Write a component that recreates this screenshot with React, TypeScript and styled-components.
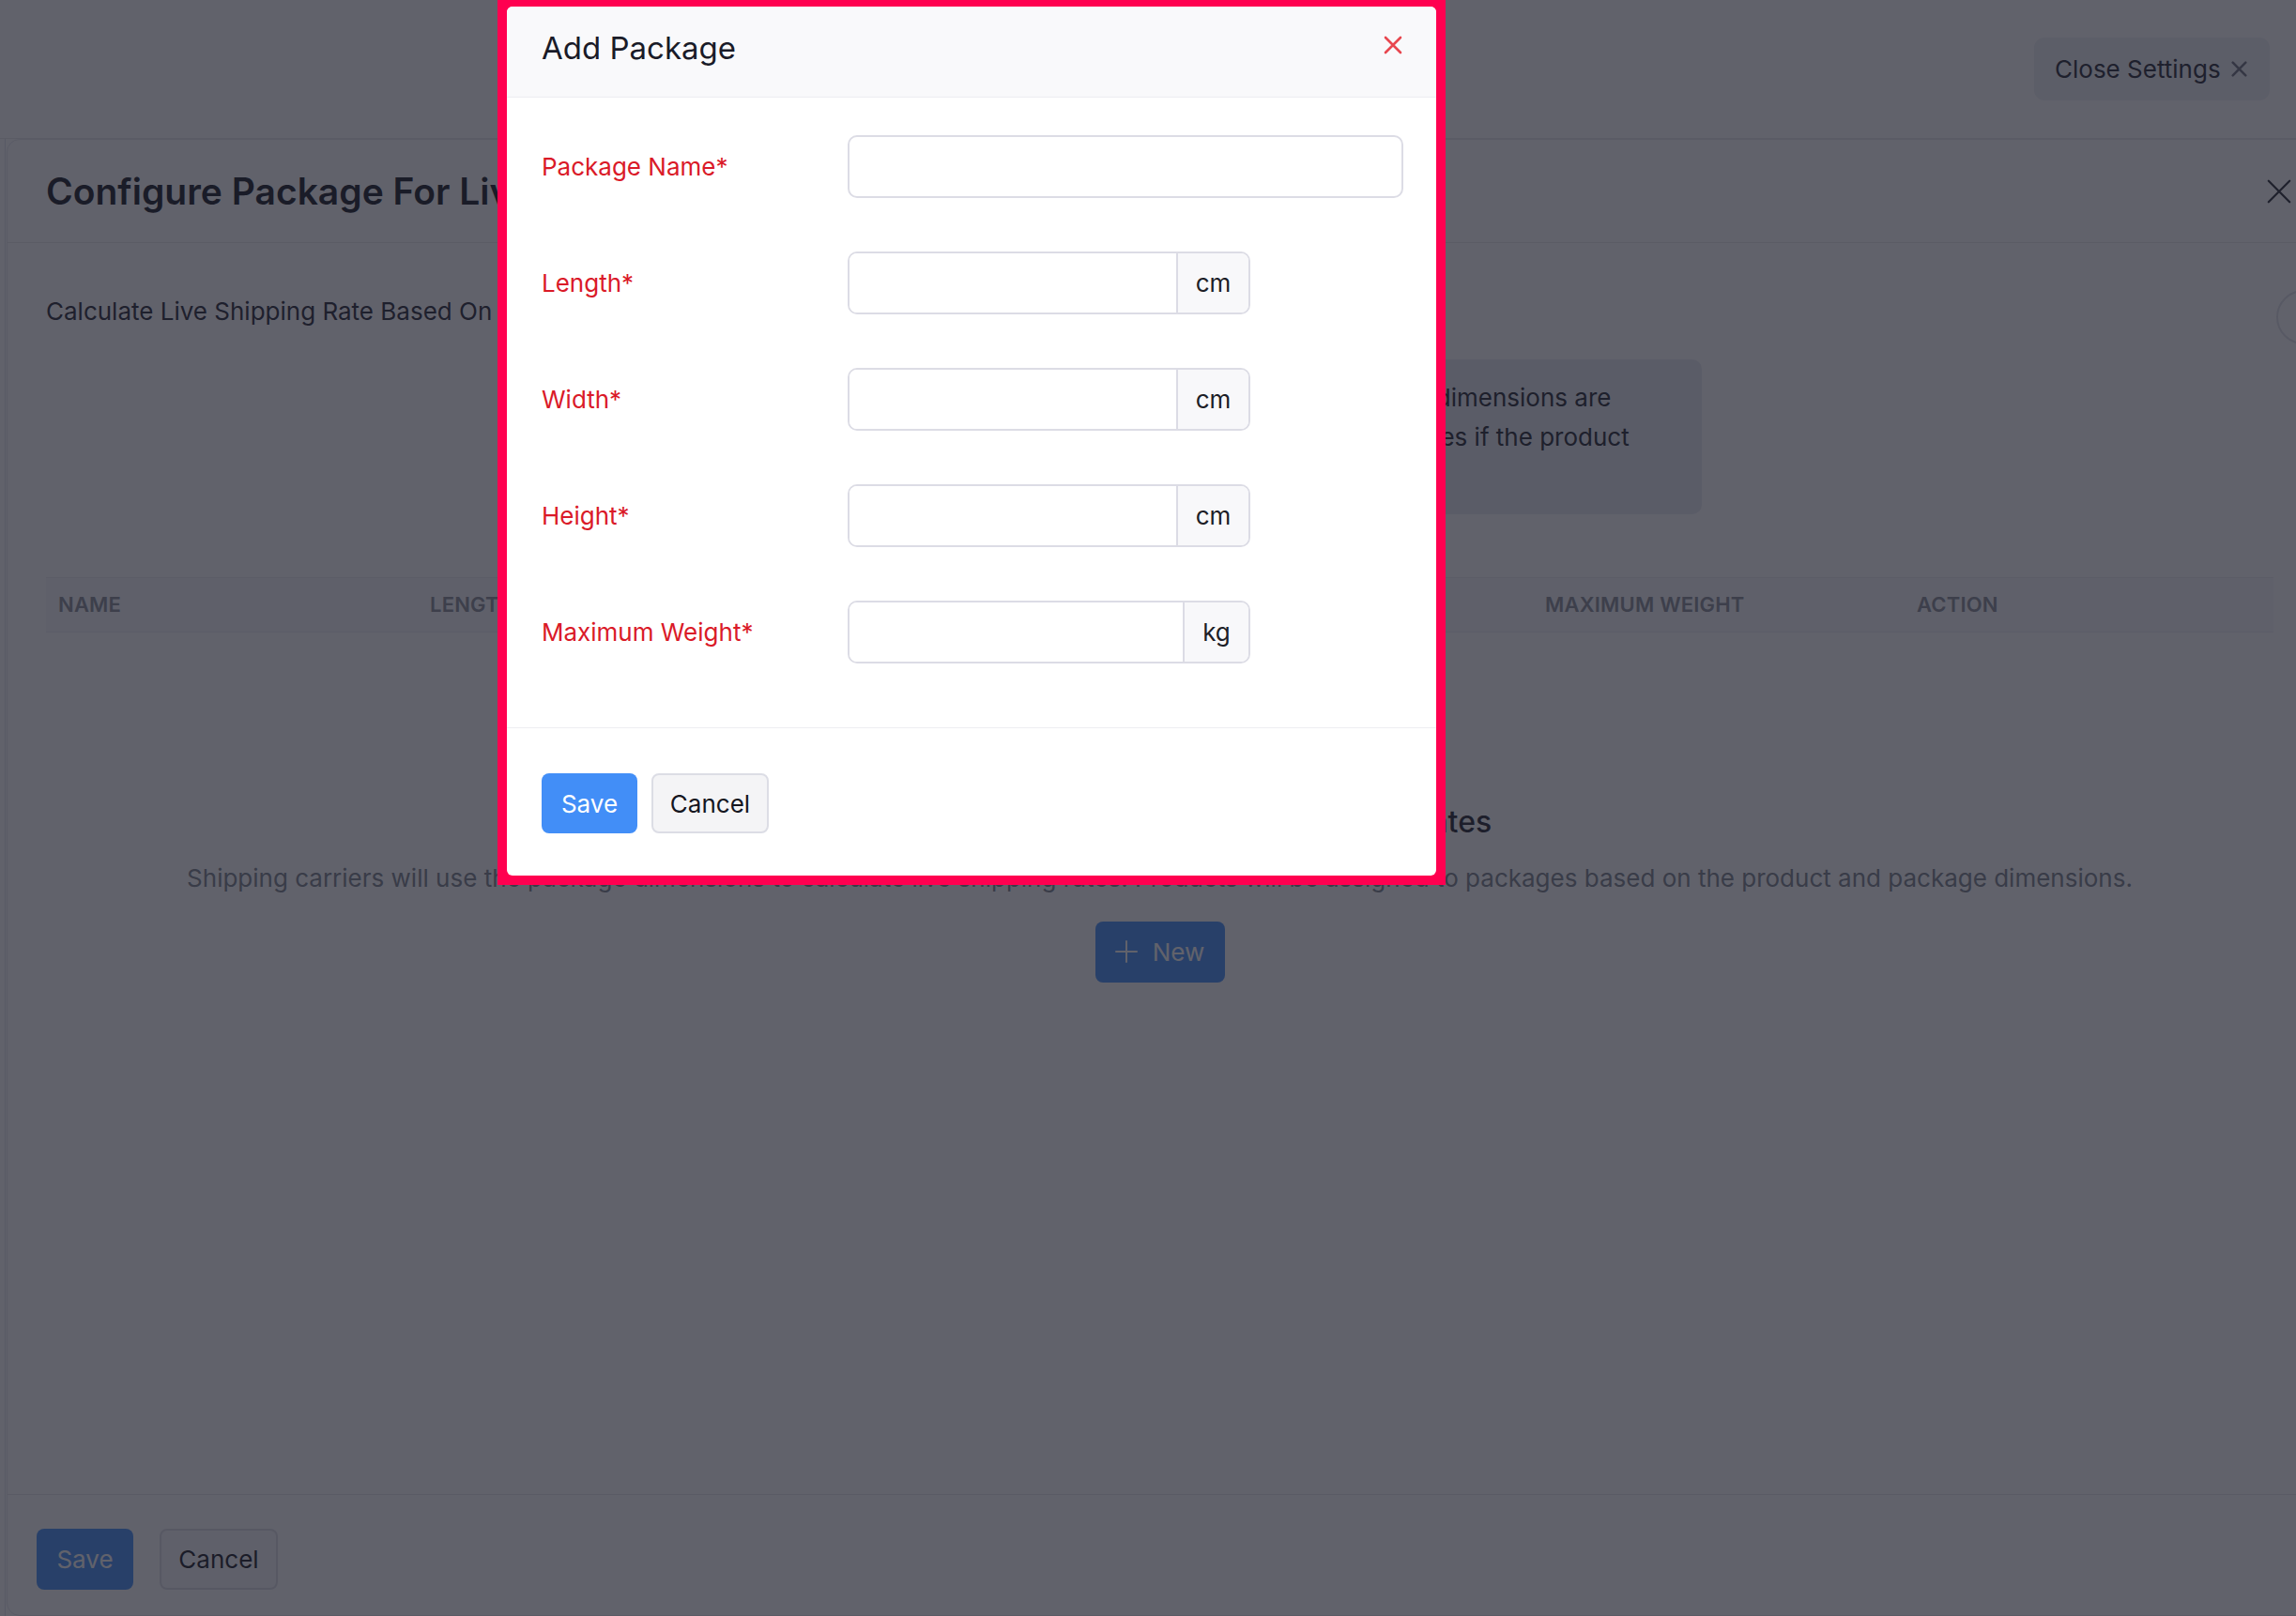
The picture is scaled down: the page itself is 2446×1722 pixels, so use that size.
import React from 'react';
import styled, { createGlobalStyle } from 'styled-components';

const GlobalStyle = createGlobalStyle`
  html, body {
    margin: 0;
    padding: 0;
    background: #ffffff;
  }

  body {
    font-family: Inter, 'Noto Sans', 'Liberation Sans', sans-serif;
    color: #1f2230;
  }

  * {
    box-sizing: border-box;
  }
`;

const Page = styled.div`
  position: relative;
  width: 100vw;
  height: 100vh;
  overflow: hidden;
  background: #ffffff;
`;

const TopBar = styled.header`
  height: 148px;
  display: flex;
  align-items: center;
  justify-content: flex-end;
  padding: 0 28px 0 0;
  border-bottom: 1px solid #e6e7ec;
`;

const CloseSettingsButton = styled.button`
  display: flex;
  align-items: center;
  gap: 11px;
  height: 67px;
  width: 251px;
  padding: 0 22px;
  border: none;
  border-radius: 11px;
  background: #eef0f4;
  font-family: inherit;
  font-size: 26px;
  color: #1f2330;
  cursor: pointer;
`;

const SettingsArea = styled.div`
  height: calc(100vh - 148px);
  margin-left: 5px;
  border-left: 1px solid #e2e4ea;
  padding-left: 1px;
`;

const Panel = styled.section`
  width: 2456px;
  height: 100%;
  display: flex;
  flex-direction: column;
  border: 1px solid #e6e7ec;
  border-radius: 14px;
  background: #ffffff;
`;

const PanelHeader = styled.div`
  height: 110px;
  flex-shrink: 0;
  display: flex;
  align-items: center;
  justify-content: space-between;
  padding: 0 20px 0 41px;
  border-bottom: 1px solid #e6e7ec;
`;

const PanelTitle = styled.h1`
  margin: 0;
  font-size: 39px;
  font-weight: 600;
  color: #121420;
`;

const IconButton = styled.button<{ lift?: number }>`
  display: flex;
  align-items: center;
  justify-content: center;
  padding: 0;
  margin-top: ${({ lift }) => (lift ? -lift : 0)}px;
  border: none;
  background: transparent;
  cursor: pointer;
`;

const PanelBody = styled.div`
  flex: 1;
  padding: 50px 0 0 41px;
  width: 2414px;
`;

const RateRow = styled.div`
  display: grid;
  grid-template-columns: 820px 1fr;
`;

const RowLabel = styled.div`
  font-size: 26px;
  line-height: 46px;
  color: #1f2230;
`;

const RadioGroup = styled.div`
  display: flex;
  gap: 48px;
  height: 46px;
  align-items: center;
`;

const RadioOption = styled.label`
  display: flex;
  align-items: center;
  gap: 14px;
  font-size: 26px;
  color: #1f2230;
`;

const RadioDot = styled.span<{ checked?: boolean }>`
  width: 24px;
  height: 24px;
  border-radius: 50%;
  border: ${({ checked }) => (checked ? '7px solid #428ef7' : '2px solid #c9ccd6')};
`;

const InfoBox = styled.div`
  margin-top: 28px;
  width: 944px;
  padding: 20px 24px;
  border-radius: 10px;
  background: #e8ebf2;
  font-size: 26px;
  line-height: 41.5px;
  color: #20222c;
  white-space: nowrap;
`;

const TableHead = styled.div`
  margin-top: 67px;
  width: 2373px;
  height: 59px;
  display: grid;
  grid-template-columns: repeat(6, 396px);
  align-items: center;
  padding-left: 13px;
  overflow: hidden;
  background: #f7f8fa;
  border-top: 1px solid #eceef2;
  border-bottom: 1px solid #eceef2;
`;

const HeadCell = styled.div`
  font-size: 22px;
  font-weight: 600;
  letter-spacing: 0.2px;
  text-transform: uppercase;
  color: #858a95;
`;

const EmptyState = styled.div`
  width: 2373px;
  padding-top: 180px;
  display: flex;
  flex-direction: column;
  align-items: center;
`;

const EmptyTitle = styled.h2`
  margin: 0;
  font-size: 32px;
  line-height: 44px;
  font-weight: 500;
  color: #1b1d29;
`;

const EmptyText = styled.p`
  margin: 18px 0 0;
  font-size: 26px;
  line-height: 40px;
  color: #7a7f8b;
`;

const PrimaryButton = styled.button<{ width: number; height: number }>`
  display: flex;
  align-items: center;
  justify-content: center;
  gap: 16px;
  width: ${({ width }) => width}px;
  height: ${({ height }) => height}px;
  border: none;
  border-radius: 8px;
  background: #428ef7;
  color: #ffffff;
  font-family: inherit;
  font-size: 26px;
  cursor: pointer;
`;

const NewButton = styled(PrimaryButton)`
  margin-top: 26px;
`;

const SecondaryButton = styled.button<{ width: number; height: number; ghost?: boolean }>`
  width: ${({ width }) => width}px;
  height: ${({ height }) => height}px;
  border: 2px solid #dcdde5;
  border-radius: 8px;
  background: ${({ ghost }) => (ghost ? '#f7f8fa' : '#f4f4f6')};
  color: #15161f;
  font-family: inherit;
  font-size: 26px;
  cursor: pointer;
`;

const PanelFooter = styled.div<{ gap: number }>`
  flex-shrink: 0;
  display: flex;
  gap: ${({ gap }) => gap}px;
  padding: 36px 0 27px 31px;
  border-top: 1px solid #e6e7ec;
`;

const HelpBubble = styled.div`
  position: absolute;
  left: 2425px;
  top: 309px;
  width: 58px;
  height: 58px;
  border-radius: 50%;
  border: 2px solid #dfe2e8;
  background: #ffffff;
`;

const Backdrop = styled.div`
  position: fixed;
  inset: 0;
  background: rgba(30, 32, 44, 0.7);
`;

const ModalFrame = styled.div`
  position: fixed;
  left: 530px;
  top: -3px;
  width: 1010px;
  padding: 10px;
  background: #ff0050;
`;

const Dialog = styled.div`
  background: #ffffff;
  border-radius: 6px;
  overflow: hidden;
`;

const DialogHeader = styled.div`
  height: 97px;
  padding: 0 36px 9px 37px;
  display: flex;
  align-items: center;
  justify-content: space-between;
  background: #f9f9fb;
  border-bottom: 1px solid #ededf1;
`;

const DialogTitle = styled.h3`
  margin: 0;
  font-size: 33px;
  font-weight: 400;
  color: #1a1b28;
`;

const DialogBody = styled.div`
  padding: 40px 35px 68px 37px;
  display: flex;
  flex-direction: column;
  gap: 57px;
`;

const FieldRow = styled.div`
  display: grid;
  grid-template-columns: 326px auto;
  align-items: center;
`;

const FieldLabel = styled.label`
  font-size: 26px;
  color: #da1a28;
`;

const TextInput = styled.input<{ width: number }>`
  width: ${({ width }) => width}px;
  height: 67px;
  padding: 0 20px;
  border: 2px solid #dcdce5;
  border-radius: 10px;
  background: #ffffff;
  font-family: inherit;
  font-size: 26px;
  outline: none;
`;

const UnitGroup = styled.div<{ width: number }>`
  display: flex;
  width: ${({ width }) => width}px;
  height: 67px;
  border: 2px solid #dcdce5;
  border-radius: 10px;
  overflow: hidden;
`;

const UnitInput = styled.input`
  flex: 1;
  min-width: 0;
  border: none;
  padding: 0 20px;
  font-family: inherit;
  font-size: 26px;
  outline: none;
`;

const UnitAddon = styled.span<{ width: number }>`
  width: ${({ width }) => width}px;
  display: flex;
  align-items: center;
  justify-content: center;
  border-left: 2px solid #dcdce5;
  background: #f8f8fa;
  font-size: 26px;
  color: #1d1e27;
`;

const DialogFooter = styled.div`
  display: flex;
  gap: 15px;
  padding: 48px 37px 45px;
  border-top: 1px solid #ededf1;
`;

const Cross = ({ size, stroke, weight }: { size: number; stroke: string; weight: number }) => (
  <svg width={size} height={size} viewBox="0 0 20 20" fill="none">
    <path d="M2 2L18 18M18 2L2 18" stroke={stroke} strokeWidth={weight} strokeLinecap="round" />
  </svg>
);

const Plus = () => (
  <svg width="24" height="24" viewBox="0 0 24 24" fill="none">
    <path d="M12 1V23M1 12H23" stroke="currentColor" strokeWidth="2" strokeLinecap="round" />
  </svg>
);

const fields = [
  { label: 'Length*', unit: 'cm', unitWidth: 77 },
  { label: 'Width*', unit: 'cm', unitWidth: 77 },
  { label: 'Height*', unit: 'cm', unitWidth: 77 },
  { label: 'Maximum Weight*', unit: 'kg', unitWidth: 70 },
];

const columns = ['Name', 'Length', 'Width', 'Height', 'Maximum Weight', 'Action'];

const App = () => (
  <>
    <GlobalStyle />
    <Page>
      <TopBar>
        <CloseSettingsButton>
          Close Settings
          <Cross size={17} stroke="#6b6f7c" weight={3} />
        </CloseSettingsButton>
      </TopBar>

      <SettingsArea>
        <Panel>
          <PanelHeader>
            <PanelTitle>Configure Package For Live Shipping Rates</PanelTitle>
            <IconButton>
              <Cross size={28} stroke="#23252f" weight={1.6} />
            </IconButton>
          </PanelHeader>

          <PanelBody>
            <RateRow>
              <RowLabel>Calculate Live Shipping Rate Based On</RowLabel>
              <div>
                <RadioGroup>
                  <RadioOption>
                    <RadioDot checked />
                    Package Dimensions
                  </RadioOption>
                  <RadioOption>
                    <RadioDot />
                    Product Dimensions
                  </RadioOption>
                </RadioGroup>
                <InfoBox>
                  Live shipping rates are calculated with the package dimensions are
                  <br />
                  used instead to calculate all the carriers shipping rates if the product
                  <br />
                  dimensions are not set.
                </InfoBox>
              </div>
            </RateRow>

            <TableHead>
              {columns.map(column => (
                <HeadCell key={column}>{column}</HeadCell>
              ))}
            </TableHead>

            <EmptyState>
              <EmptyTitle>Add Your Packages to Get Live Shipping Rates</EmptyTitle>
              <EmptyText>
                Shipping carriers will use the package dimensions to calculate live shipping rates. Products will be
                assigned to packages based on the product and package dimensions.
              </EmptyText>
              <NewButton width={138} height={65}>
                <Plus />
                New
              </NewButton>
            </EmptyState>
          </PanelBody>

          <PanelFooter gap={28}>
            <PrimaryButton width={103} height={65}>
              Save
            </PrimaryButton>
            <SecondaryButton width={126} height={65} ghost>
              Cancel
            </SecondaryButton>
          </PanelFooter>
        </Panel>
      </SettingsArea>

      <HelpBubble />
      <Backdrop />

      <ModalFrame>
        <Dialog>
          <DialogHeader>
            <DialogTitle>Add Package</DialogTitle>
            <IconButton lift={6}>
              <Cross size={20} stroke="#e8474f" weight={2.6} />
            </IconButton>
          </DialogHeader>

          <DialogBody>
            <FieldRow>
              <FieldLabel>Package Name*</FieldLabel>
              <TextInput width={592} />
            </FieldRow>
            {fields.map(field => (
              <FieldRow key={field.label}>
                <FieldLabel>{field.label}</FieldLabel>
                <UnitGroup width={429}>
                  <UnitInput />
                  <UnitAddon width={field.unitWidth}>{field.unit}</UnitAddon>
                </UnitGroup>
              </FieldRow>
            ))}
          </DialogBody>

          <DialogFooter>
            <PrimaryButton width={102} height={64}>
              Save
            </PrimaryButton>
            <SecondaryButton width={125} height={64}>
              Cancel
            </SecondaryButton>
          </DialogFooter>
        </Dialog>
      </ModalFrame>
    </Page>
  </>
);

export default App;
